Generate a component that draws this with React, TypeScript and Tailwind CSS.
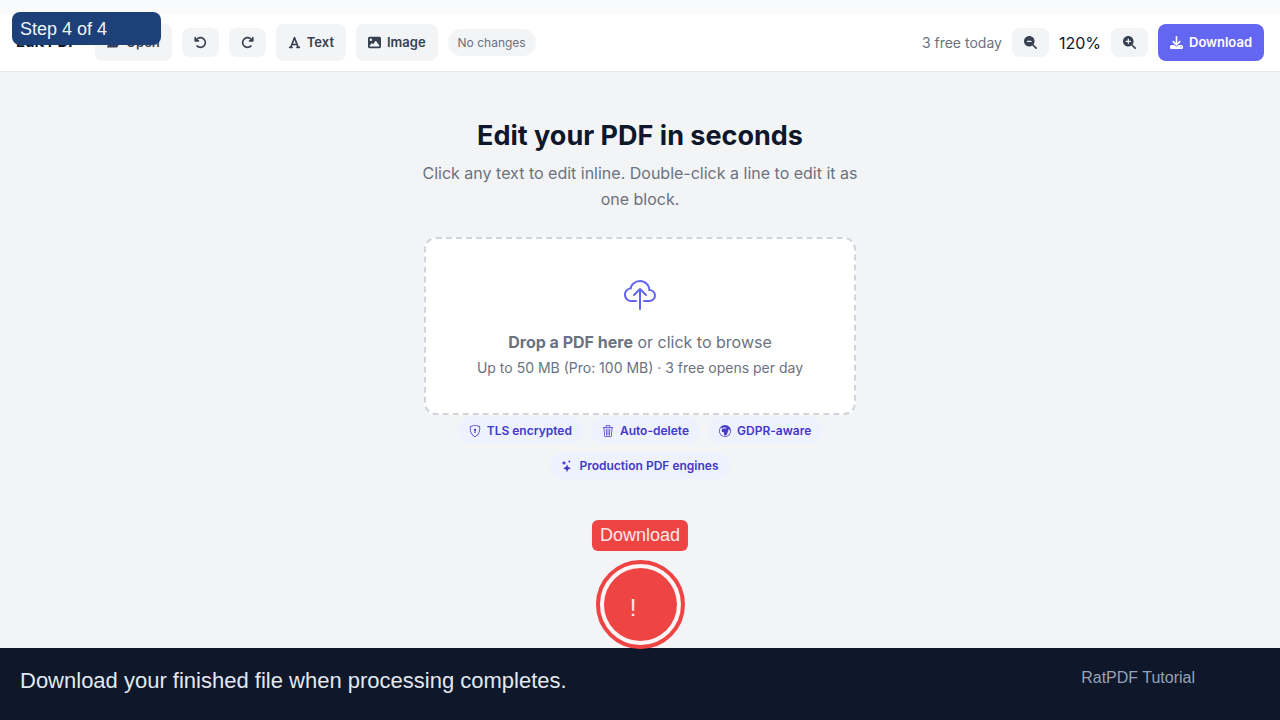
import type { ReactNode } from "react";
import {
  FaArrowRotateLeft,
  FaArrowRotateRight,
  FaDownload,
  FaFolderOpen,
  FaFont,
  FaImage,
  FaMagnifyingGlassMinus,
  FaMagnifyingGlassPlus,
} from "react-icons/fa6";
import { BsCloudUpload, BsGlobeEuropeAfrica, BsShieldLock, BsStars, BsTrash3 } from "react-icons/bs";

function ToolButton({ icon, label }: { icon: ReactNode; label: string }) {
  return (
    <button
      type="button"
      className="flex h-[37px] items-center gap-1.5 rounded-lg bg-[#f3f4f6] px-3 text-[13px] font-semibold text-[#374151]"
    >
      {icon}
      {label}
    </button>
  );
}

function IconButton({ icon, label }: { icon: ReactNode; label: string }) {
  return (
    <button
      type="button"
      aria-label={label}
      className="flex h-[29px] items-center rounded-lg bg-[#f3f4f6] px-3 text-[13px] text-[#374151]"
    >
      {icon}
    </button>
  );
}

function Toolbar() {
  return (
    <header className="flex h-[58px] items-center justify-between border-b border-[#e5e7eb] bg-white px-4">
      <div className="flex items-center gap-2.5">
        <strong className="mr-2 text-[15px] font-bold text-[#0f172a]">Edit PDF</strong>
        <ToolButton icon={<FaFolderOpen />} label="Open" />
        <IconButton icon={<FaArrowRotateLeft />} label="Undo" />
        <IconButton icon={<FaArrowRotateRight />} label="Redo" />
        <ToolButton icon={<FaFont />} label="Text" />
        <ToolButton icon={<FaImage />} label="Image" />
        <span className="flex h-[27px] items-center rounded-full bg-[#f3f4f6] px-2.5 text-xs text-[#6b7280]">
          No changes
        </span>
      </div>
      <div className="flex items-center gap-2.5">
        <span className="text-sm text-[#6b7280]">3 free today</span>
        <IconButton icon={<FaMagnifyingGlassMinus />} label="Zoom out" />
        <span className="text-base text-[#0f172a]">120%</span>
        <IconButton icon={<FaMagnifyingGlassPlus />} label="Zoom in" />
        <button
          type="button"
          className="flex h-[37px] items-center gap-1.5 rounded-lg bg-[#6366f1] px-3 text-[13px] font-semibold text-white"
        >
          <FaDownload />
          Download
        </button>
      </div>
    </header>
  );
}

function Chip({ icon, label }: { icon: ReactNode; label: string }) {
  return (
    <li className="flex h-[27px] items-center gap-1.5 rounded-full bg-[#eef2ff] px-[11px] text-xs font-semibold text-[#4338ca]">
      {icon}
      {label}
    </li>
  );
}

function Callout() {
  return (
    <div className="absolute bottom-[71px] left-1/2 flex -translate-x-1/2 flex-col items-center gap-[9px] font-['Liberation_Sans',Arial,sans-serif] text-[#fde8e8]">
      <span className="flex h-[31px] items-center rounded-md bg-[#ef4444] px-2 pb-0.5 text-lg">Download</span>
      <span className="flex size-[89px] rounded-full border-4 border-[#ef4444] bg-[#fdf5f5] p-1">
        <span className="flex flex-1 items-center justify-center rounded-full bg-[#ef4444] pt-1.5 pr-3.5 text-2xl">
          !
        </span>
      </span>
    </div>
  );
}

export default function App() {
  return (
    <div className="relative flex min-h-screen flex-col bg-[#f3f4f6] font-[Inter,sans-serif]">
      <div className="h-3.5 bg-[#f8fafc]" />
      <Toolbar />
      <main className="mx-auto flex w-full max-w-[432px] flex-1 flex-col pt-11 text-center">
        <h1 className="text-[27px] leading-10 font-bold text-[#0f172a]">Edit your PDF in seconds</h1>
        <p className="-mx-2 mt-1 text-base leading-[26px] text-[#6b7280]">
          Click any text to edit inline. Double-click a line to edit it as one block.
        </p>
        <button
          type="button"
          className="mt-[25px] flex h-[178px] flex-col items-center rounded-xl border-2 border-dashed border-[#d1d5db] bg-white pt-[41px] text-[#6b7280]"
        >
          <BsCloudUpload className="text-[32px] text-[#6366f1]" />
          <span className="mt-[17px] text-base leading-[26px]">
            <strong className="font-bold">Drop a PDF here</strong> or click to browse
          </span>
          <span className="text-sm leading-[26px]">Up to 50 MB (Pro: 100 MB) · 3 free opens per day</span>
        </button>
        <ul className="mt-0.5 flex flex-wrap justify-center gap-2 px-6">
          <Chip icon={<BsShieldLock />} label="TLS encrypted" />
          <Chip icon={<BsTrash3 />} label="Auto-delete" />
          <Chip icon={<BsGlobeEuropeAfrica />} label="GDPR-aware" />
          <Chip icon={<BsStars />} label="Production PDF engines" />
        </ul>
      </main>
      <footer className="flex h-[72px] items-start justify-between bg-[#0f172a] pr-[85px] pl-5 font-['Liberation_Sans',Arial,sans-serif]">
        <p className="pt-[17px] text-[22px] leading-8 text-[#e2e8f0]">Download your finished file when processing completes.</p>
        <p className="pt-[18px] text-base text-[#94a3b8]">RatPDF Tutorial</p>
      </footer>
      <div className="absolute top-3 left-3 flex h-[33px] w-[149px] items-center rounded-lg bg-[#1e4078] px-2 font-['Liberation_Sans',Arial,sans-serif] text-lg text-[#f1f5f9]">
        Step 4 of 4
      </div>
      <Callout />
    </div>
  );
}
